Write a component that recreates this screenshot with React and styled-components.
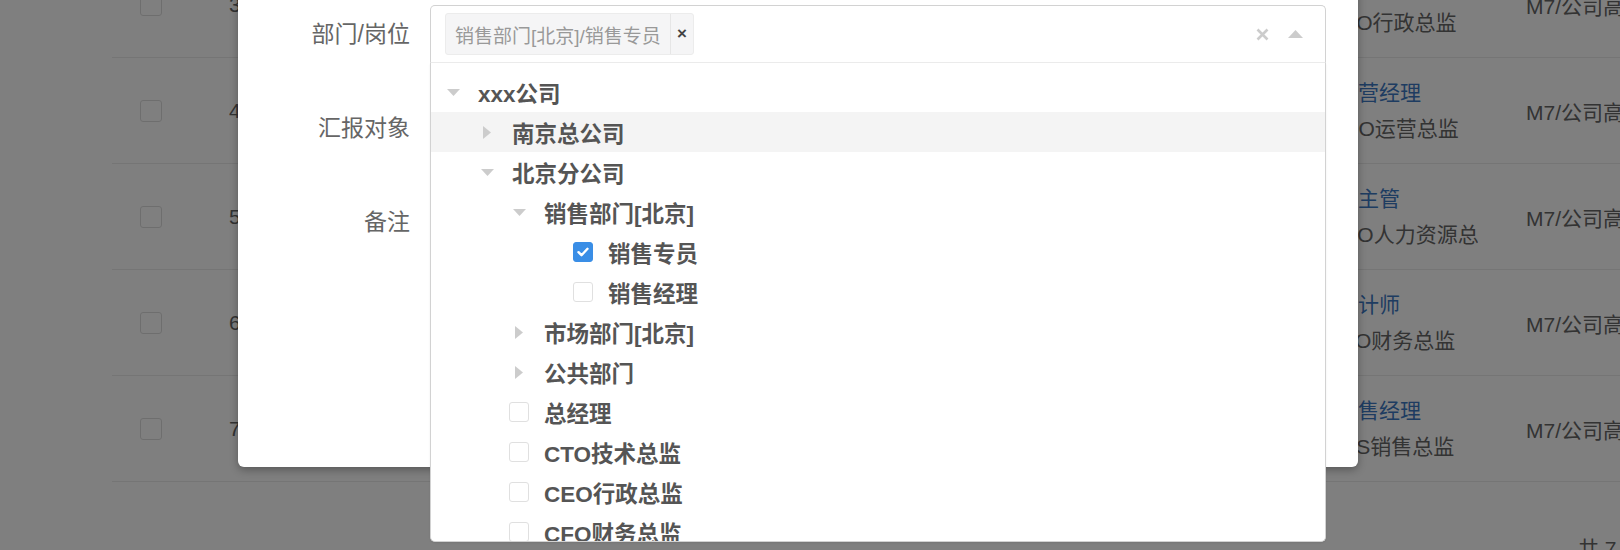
import * as React from "react"
import styled, { createGlobalStyle } from 'styled-components'

const FONT = `"Liberation Sans", "Noto Sans CJK SC", sans-serif`

const staff = [
  { no: 3, name: '王芳', title: '行政经理', post: 'CEO行政总监', level: 'M7/公司高管' },
  { no: 4, name: '李强', title: '运营经理', post: 'COO运营总监', level: 'M7/公司高管' },
  { no: 5, name: '张敏', title: '副主管', post: 'CHO人力资源总监', level: 'M7/公司高管' },
  { no: 6, name: '刘洋', title: '会计师', post: 'CFO财务总监', level: 'M7/公司高管' },
  { no: 7, name: '陈静', title: '销售经理', post: 'CSS销售总监', level: 'M7/公司高管' },
]

// pad = left offset of the arrow / checkbox slot inside the menu
const options = [
  { label: 'xxx公司', pad: 9, kind: 'open' },
  { label: '南京总公司', pad: 43, kind: 'closed', active: true },
  { label: '北京分公司', pad: 43, kind: 'open' },
  { label: '销售部门[北京]', pad: 75, kind: 'open' },
  { label: '销售专员', pad: 139, kind: 'checked' },
  { label: '销售经理', pad: 139, kind: 'unchecked' },
  { label: '市场部门[北京]', pad: 75, kind: 'closed' },
  { label: '公共部门', pad: 75, kind: 'closed' },
  { label: '总经理', pad: 75, kind: 'unchecked' },
  { label: 'CTO技术总监', pad: 75, kind: 'unchecked' },
  { label: 'CEO行政总监', pad: 75, kind: 'unchecked' },
  { label: 'CFO财务总监', pad: 75, kind: 'unchecked' },
  { label: 'COO运营总监', pad: 75, kind: 'unchecked' },
]

const Arrow = ({ open }) => (
  open
    ? <svg width="13" height="7" viewBox="0 0 13 7"><path d="M0 0h13L6.5 7z" fill="#ccc" /></svg>
    : <svg width="8" height="13" viewBox="0 0 8 13"><path d="M0 0l8 6.5L0 13z" fill="#ccc" /></svg>
)

const TreeOption = ({ option }) => {
  const isBranch = option.kind === 'open' || option.kind === 'closed'
  return (
    <OptionRow $pad={option.pad} $active={option.active}>
      <Slot $center={isBranch}>
        {isBranch
          ? <Arrow open={option.kind === 'open'} />
          : <Check $checked={option.kind === 'checked'}>
              {option.kind === 'checked' && (
                <svg width="12" height="10" viewBox="0 0 12 10">
                  <path d="M1.5 5.2l3 3L10.5 1.8" fill="none" stroke="#fff" strokeWidth="2.4" strokeLinecap="round" strokeLinejoin="round" />
                </svg>
              )}
            </Check>}
      </Slot>
      <OptionLabel>{option.label}</OptionLabel>
    </OptionRow>
  )
}

const App = () => {
  return (
    <Page>
      <GlobalStyle />
      <Table>
        {staff.map(s => (
          <Row key={s.no}>
            <CheckCell><BgCheck /></CheckCell>
            <Cell>{s.no}</Cell>
            <Cell>{s.name}</Cell>
            <PostCell>
              <TitleLink>{s.title}</TitleLink>
              <PostText>{s.post}</PostText>
            </PostCell>
            <Cell />
            <Cell>{s.level}</Cell>
          </Row>
        ))}
        <Footer>共 7 条</Footer>
      </Table>
      <Mask />
      <Modal>
        <FormRow>
          <Label>部门/岗位</Label>
          <Treeselect>
            <Control>
              <Tag>
                <TagLabel>销售部门[北京]/销售专员</TagLabel>
                <TagRemove>×</TagRemove>
              </Tag>
              <Spacer />
              <ClearIcon>
                <svg width="13" height="13" viewBox="0 0 13 13">
                  <path d="M1.5 1.5l10 10M11.5 1.5l-10 10" stroke="#ccc" strokeWidth="2.6" />
                </svg>
              </ClearIcon>
              <CaretIcon>
                <svg width="15" height="8" viewBox="0 0 15 8"><path d="M0 8L7.5 0 15 8z" fill="#ccc" /></svg>
              </CaretIcon>
            </Control>
            <Menu>
              {options.map(o => <TreeOption key={o.label} option={o} />)}
            </Menu>
          </Treeselect>
        </FormRow>
        <FormRow>
          <Label>汇报对象</Label>
          <Input />
        </FormRow>
        <FormRow>
          <Label>备注</Label>
          <Textarea />
        </FormRow>
      </Modal>
    </Page>
  )
}

export default App

const GlobalStyle = createGlobalStyle`
  body {
    margin: 0;
    font-family: ${FONT};
    background: #fff;
  }
`
const Page = styled.div`
  position: relative;
  width: 1620px;
  height: 550px;
  overflow: hidden;
  background: #fff;
`
const Table = styled.div`
  margin: -48px 0 0 112px;
`
const Row = styled.div`
  display: grid;
  grid-template-columns: 117px 80px 1018px 151px 48px 1fr;
  align-items: center;
  height: 106px;
  box-sizing: border-box;
  border-bottom: 1px solid #eaeaea;
  font-size: 21px;
  color: #666;
  white-space: nowrap;
`
const CheckCell = styled.div`
  padding-left: 28px;
  display: flex;
`
const BgCheck = styled.span`
  width: 22px;
  height: 22px;
  box-sizing: border-box;
  border: 1px solid #ddd;
  border-radius: 3px;
  background: #fff;
`
const Cell = styled.div`
  overflow: hidden;
`
const PostCell = styled.div`
  display: flex;
  flex-direction: column;
  overflow: hidden;
  line-height: 36px;
`
const TitleLink = styled.a`
  color: #3c78c3;
  padding-left: 10px;
`
const PostText = styled.span`
  color: #666;
`
const Footer = styled.div`
  padding: 52px 0 0 1466px;
  font-size: 21px;
  line-height: 30px;
  color: #666;
  white-space: nowrap;
`
const Mask = styled.div`
  position: absolute;
  inset: 0;
  background: rgba(0, 0, 0, 0.5);
`
const Modal = styled.div`
  position: absolute;
  left: 238px;
  top: -30px;
  width: 1120px;
  height: 497px;
  box-sizing: border-box;
  padding-top: 35px;
  background: #fff;
  border-radius: 6px;
  box-shadow: 0 3px 9px rgba(0, 0, 0, 0.3);
`
const FormRow = styled.div`
  display: flex;
  align-items: flex-start;
  margin-bottom: 36px;
`
const Label = styled.div`
  width: 172px;
  flex-shrink: 0;
  margin-right: 20px;
  text-align: right;
  line-height: 58px;
  font-size: 23px;
  color: #666;
`
const Treeselect = styled.div`
  position: relative;
  width: 896px;
  z-index: 2;
`
const Control = styled.div`
  display: flex;
  align-items: center;
  height: 58px;
  box-sizing: border-box;
  padding: 0 22px 0 14px;
  border: 1px solid #d2d2d2;
  border-bottom-color: #ececec;
  border-radius: 5px 5px 0 0;
  background: #fff;
`
const Tag = styled.div`
  display: flex;
  align-items: stretch;
  height: 42px;
  box-sizing: border-box;
  border: 1px solid #ececec;
  border-radius: 3px;
  background: #f5f5f6;
`
const TagLabel = styled.span`
  display: flex;
  align-items: center;
  padding: 0 9px 0 9px;
  font-size: 19px;
  color: #999;
  border-right: 1px solid #e6e6e6;
`
const TagRemove = styled.span`
  display: flex;
  align-items: center;
  justify-content: center;
  width: 22px;
  font-size: 17px;
  font-weight: 700;
  color: #444;
`
const Spacer = styled.div`
  flex: 1;
`
const ClearIcon = styled.span`
  display: flex;
  margin-right: 19px;
`
const CaretIcon = styled.span`
  display: flex;
`
const Menu = styled.div`
  position: absolute;
  top: 100%;
  left: 0;
  right: 0;
  height: 479px;
  box-sizing: border-box;
  padding-top: 9px;
  overflow: hidden;
  border: 1px solid #d2d2d2;
  border-top: none;
  border-radius: 0 0 5px 5px;
  background: #fff;
  box-shadow: 0 1px 2px rgba(0, 0, 0, 0.08);
`
const OptionRow = styled.div`
  display: flex;
  align-items: center;
  height: 40px;
  padding-left: ${p => p.$pad}px;
  background: ${p => (p.$active ? '#f4f4f4' : 'transparent')};
`
const Slot = styled.span`
  display: flex;
  align-items: center;
  justify-content: ${p => (p.$center ? 'center' : 'flex-start')};
  width: 26px;
  flex-shrink: 0;
`
const Check = styled.span`
  display: flex;
  align-items: center;
  justify-content: center;
  width: 20px;
  height: 20px;
  margin-left: 3px;
  box-sizing: border-box;
  border-radius: 3px;
  border: 1px solid ${p => (p.$checked ? '#3a8ee6' : '#e0e0e0')};
  background: ${p => (p.$checked ? '#3a8ee6' : '#fff')};
`
const OptionLabel = styled.span`
  margin-left: 12px;
  font-size: 22.5px;
  font-weight: 700;
  color: #555;
  white-space: nowrap;
`
const Input = styled.div`
  width: 896px;
  height: 58px;
  box-sizing: border-box;
  border: 1px solid #ccc;
  border-radius: 4px;
`
const Textarea = styled.div`
  width: 896px;
  height: 120px;
  box-sizing: border-box;
  border: 1px solid #ccc;
  border-radius: 4px;
`
